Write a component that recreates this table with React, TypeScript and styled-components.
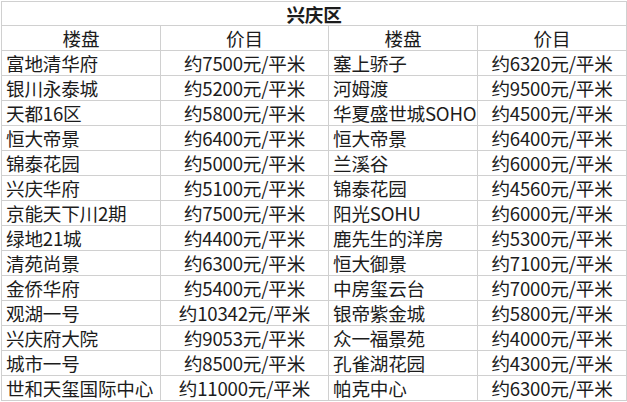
import React from 'react';
import styled, { createGlobalStyle } from 'styled-components';

const GlobalStyle = createGlobalStyle`
  body {
    margin: 0;
    background: #fff;
  }
`;

const Sheet = styled.div`
  padding: 1px 0 0 1px;
`;

const Grid = styled.div`
  display: grid;
  grid-template-columns: 159px 168px 149px 149px;
  grid-template-rows: 24px;
  grid-auto-rows: 25px;
  width: 625px;
  border-top: 1px solid #d0d0d0;
  border-left: 1px solid #d0d0d0;
  font-family: "Noto Sans CJK SC", "Liberation Sans", sans-serif;
  font-size: 18.6px;
  color: #1c1c1c;
  background: #fff;
`;

const Cell = styled.div<{ $align?: 'left' | 'center' }>`
  display: flex;
  align-items: center;
  justify-content: ${(p) => (p.$align === 'left' ? 'flex-start' : 'center')};
  padding: 0 4px;
  border-right: 1px solid #d0d0d0;
  border-bottom: 1px solid #d0d0d0;
  white-space: nowrap;
  line-height: 24px;
  letter-spacing: -0.2px;
`;

const Title = styled(Cell)`
  grid-column: 1 / -1;
  font-weight: 700;
  font-size: 18.6px;
`;

const rows: [string, string, string, string][] = [
  ['富地清华府', '约7500元/平米', '塞上骄子', '约6320元/平米'],
  ['银川永泰城', '约5200元/平米', '河姆渡', '约9500元/平米'],
  ['天都16区', '约5800元/平米', '华夏盛世城SOHO', '约4500元/平米'],
  ['恒大帝景', '约6400元/平米', '恒大帝景', '约6400元/平米'],
  ['锦泰花园', '约5000元/平米', '兰溪谷', '约6000元/平米'],
  ['兴庆华府', '约5100元/平米', '锦泰花园', '约4560元/平米'],
  ['京能天下川2期', '约7500元/平米', '阳光SOHU', '约6000元/平米'],
  ['绿地21城', '约4400元/平米', '鹿先生的洋房', '约5300元/平米'],
  ['清苑尚景', '约6300元/平米', '恒大御景', '约7100元/平米'],
  ['金侨华府', '约5400元/平米', '中房玺云台', '约7000元/平米'],
  ['观湖一号', '约10342元/平米', '银帝紫金城', '约5800元/平米'],
  ['兴庆府大院', '约9053元/平米', '众一福景苑', '约4000元/平米'],
  ['城市一号', '约8500元/平米', '孔雀湖花园', '约4300元/平米'],
  ['世和天玺国际中心', '约11000元/平米', '帕克中心', '约6300元/平米'],
];

const App = () => (
  <Sheet>
    <GlobalStyle />
    <Grid>
      <Title>兴庆区</Title>
      <Cell>楼盘</Cell>
      <Cell>价目</Cell>
      <Cell>楼盘</Cell>
      <Cell>价目</Cell>
      {rows.map((r, i) => (
        <React.Fragment key={i}>
          <Cell $align="left">{r[0]}</Cell>
          <Cell>{r[1]}</Cell>
          <Cell $align="left">{r[2]}</Cell>
          <Cell>{r[3]}</Cell>
        </React.Fragment>
      ))}
    </Grid>
  </Sheet>
);

export default App;
